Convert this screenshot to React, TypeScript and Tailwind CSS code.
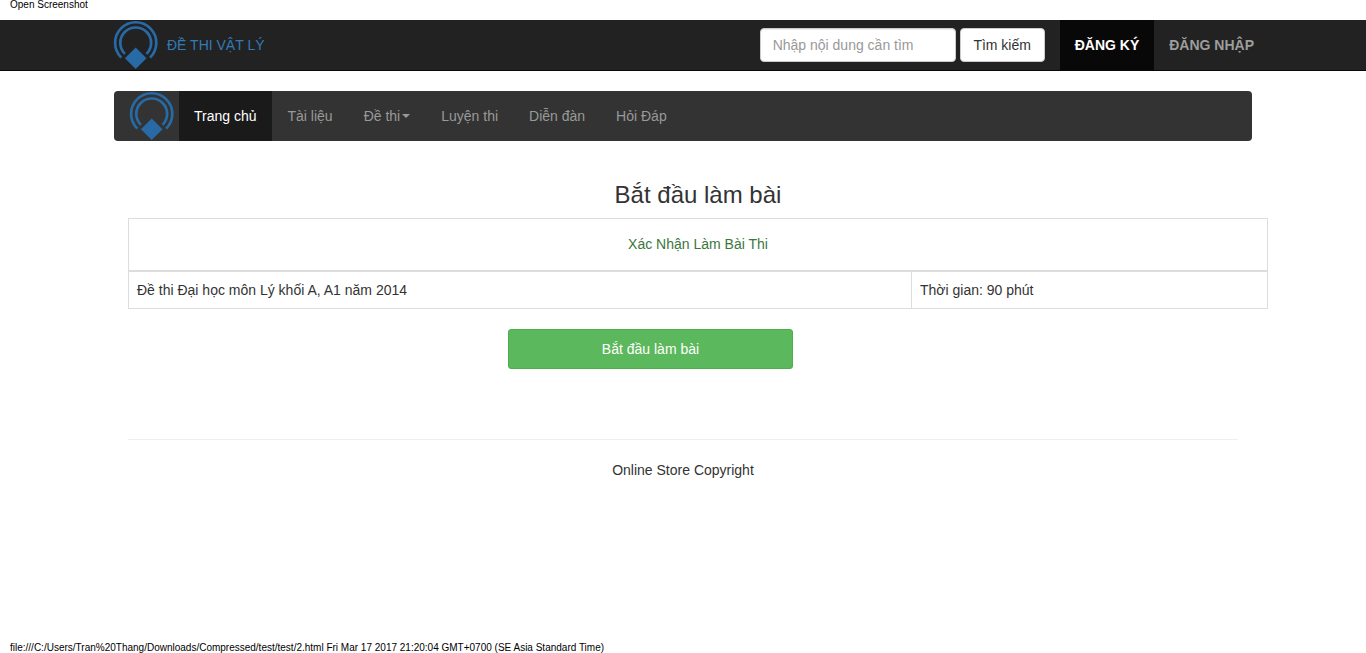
import { useState } from "react";

function Logo() {
  return (
    <svg viewBox="0 0 45 50" className="h-[50px] w-[45px] shrink-0" aria-hidden="true">
      <g fill="none" stroke="#276aa6" strokeWidth="2.7">
        <path d="M8.3 37.6A20.6 20.6 0 1 1 37.1 37.6" />
        <path d="M11.9 33.9A15.4 15.4 0 1 1 33.5 33.9" />
      </g>
      <path d="M22.7 27.5L33.5 38.3L22.7 49.1L11.9 38.3Z" fill="#276aa6" />
    </svg>
  );
}

function TopBar() {
  const [query, setQuery] = useState("");
  return (
    <header className="border-b border-[#080808] bg-[#222]">
      <div className="mx-auto flex max-w-[1170px] items-center pl-[15px]">
        <a href="#" className="flex items-center gap-[9px] text-[#337ab7]">
          <Logo />
          <span>ĐỀ THI VẬT LÝ</span>
        </a>
        <form className="ml-auto flex gap-1 pr-[15px]" onSubmit={(e) => e.preventDefault()}>
          <input
            type="text"
            aria-label="Nhập nội dung cần tìm"
            placeholder="Nhập nội dung cần tìm"
            value={query}
            onChange={(e) => setQuery(e.target.value)}
            className="h-[34px] w-[196px] rounded border border-[#ccc] bg-white px-3 text-[#555] shadow-[inset_0_1px_1px_rgba(0,0,0,0.075)] placeholder:text-[#999]"
          />
          <button type="submit" className="h-[34px] w-[85px] rounded border border-[#ccc] bg-white text-[#333]">
            Tìm kiếm
          </button>
        </form>
        <nav className="flex font-bold" aria-label="Tài khoản">
          <a href="#" className="bg-[#080808] px-[15px] py-[15px] text-white">
            ĐĂNG KÝ
          </a>
          <a href="#" className="py-[15px] pr-[14px] pl-[15px] text-[#9d9d9d]">
            ĐĂNG NHẬP
          </a>
        </nav>
      </div>
    </header>
  );
}

const links = [
  { label: "Trang chủ", active: true },
  { label: "Tài liệu" },
  { label: "Đề thi", caret: true },
  { label: "Luyện thi" },
  { label: "Diễn đàn" },
  { label: "Hỏi Đáp" },
];

function MainNav() {
  return (
    <div className="mx-auto mt-5 w-full max-w-[1170px] px-4">
      <nav className="flex overflow-hidden rounded bg-[#333] pl-[15px]" aria-label="Chính">
        <a href="#" className="pr-[5px]" aria-label="Trang chủ">
          <Logo />
        </a>
        <div className="flex gap-px">
          {links.map((link) => (
            <a
              key={link.label}
              href="#"
              className={
                link.active
                  ? "bg-[#1a1a1a] px-[15px] py-[15px] text-white"
                  : "flex items-center px-[15px] py-[15px] text-[#999]"
              }
            >
              {link.label}
              {link.caret && (
                <span className="ml-0.5 border-x-4 border-t-4 border-x-transparent border-t-[#999]" />
              )}
            </a>
          ))}
        </div>
      </nav>
    </div>
  );
}

export default function App() {
  return (
    <div className="flex min-h-screen flex-col bg-white font-['Liberation_Sans',Arial,sans-serif] text-[14px] leading-5 text-[#333]">
      <p className="h-5 px-[10px] text-[10px] leading-[10px] text-black">Open Screenshot</p>
      <TopBar />
      <MainNav />

      <main className="mx-auto w-full max-w-[1170px] pl-[30px]">
        <h1 className="mt-10 mb-[10px] text-center text-[24px] leading-[27px]">Bắt đầu làm bài</h1>
        <table className="w-full table-fixed border-collapse border border-[#ddd]">
          <colgroup>
            <col className="w-[783px]" />
            <col />
          </colgroup>
          <thead>
            <tr>
              <th
                colSpan={2}
                className="h-[52px] border border-b-2 border-[#ddd] p-2 text-center font-normal text-[#3c763d]"
              >
                Xác Nhận Làm Bài Thi
              </th>
            </tr>
          </thead>
          <tbody>
            <tr>
              <td className="border border-[#ddd] p-2">Đề thi Đại học môn Lý khối A, A1 năm 2014</td>
              <td className="border border-[#ddd] p-2">Thời gian: 90 phút</td>
            </tr>
          </tbody>
        </table>
        <div className="mt-5 grid grid-cols-12">
          <button
            type="button"
            className="col-span-3 col-start-5 h-10 rounded-[3px] border border-[#4cae4c] bg-[#5cb85c] text-white"
          >
            Bắt đầu làm bài
          </button>
        </div>
        <hr className="mt-[70px] mr-[30px] border-t border-[#eee]" />
      </main>

      <footer className="py-5 text-center">Online Store Copyright</footer>
      <p className="mt-auto px-[10px] text-[10px] leading-[10px] text-black">
        file:///C:/Users/Tran%20Thang/Downloads/Compressed/test/test/2.html Fri Mar 17 2017 21:20:04 GMT+0700 (SE Asia
        Standard Time)
      </p>
    </div>
  );
}
